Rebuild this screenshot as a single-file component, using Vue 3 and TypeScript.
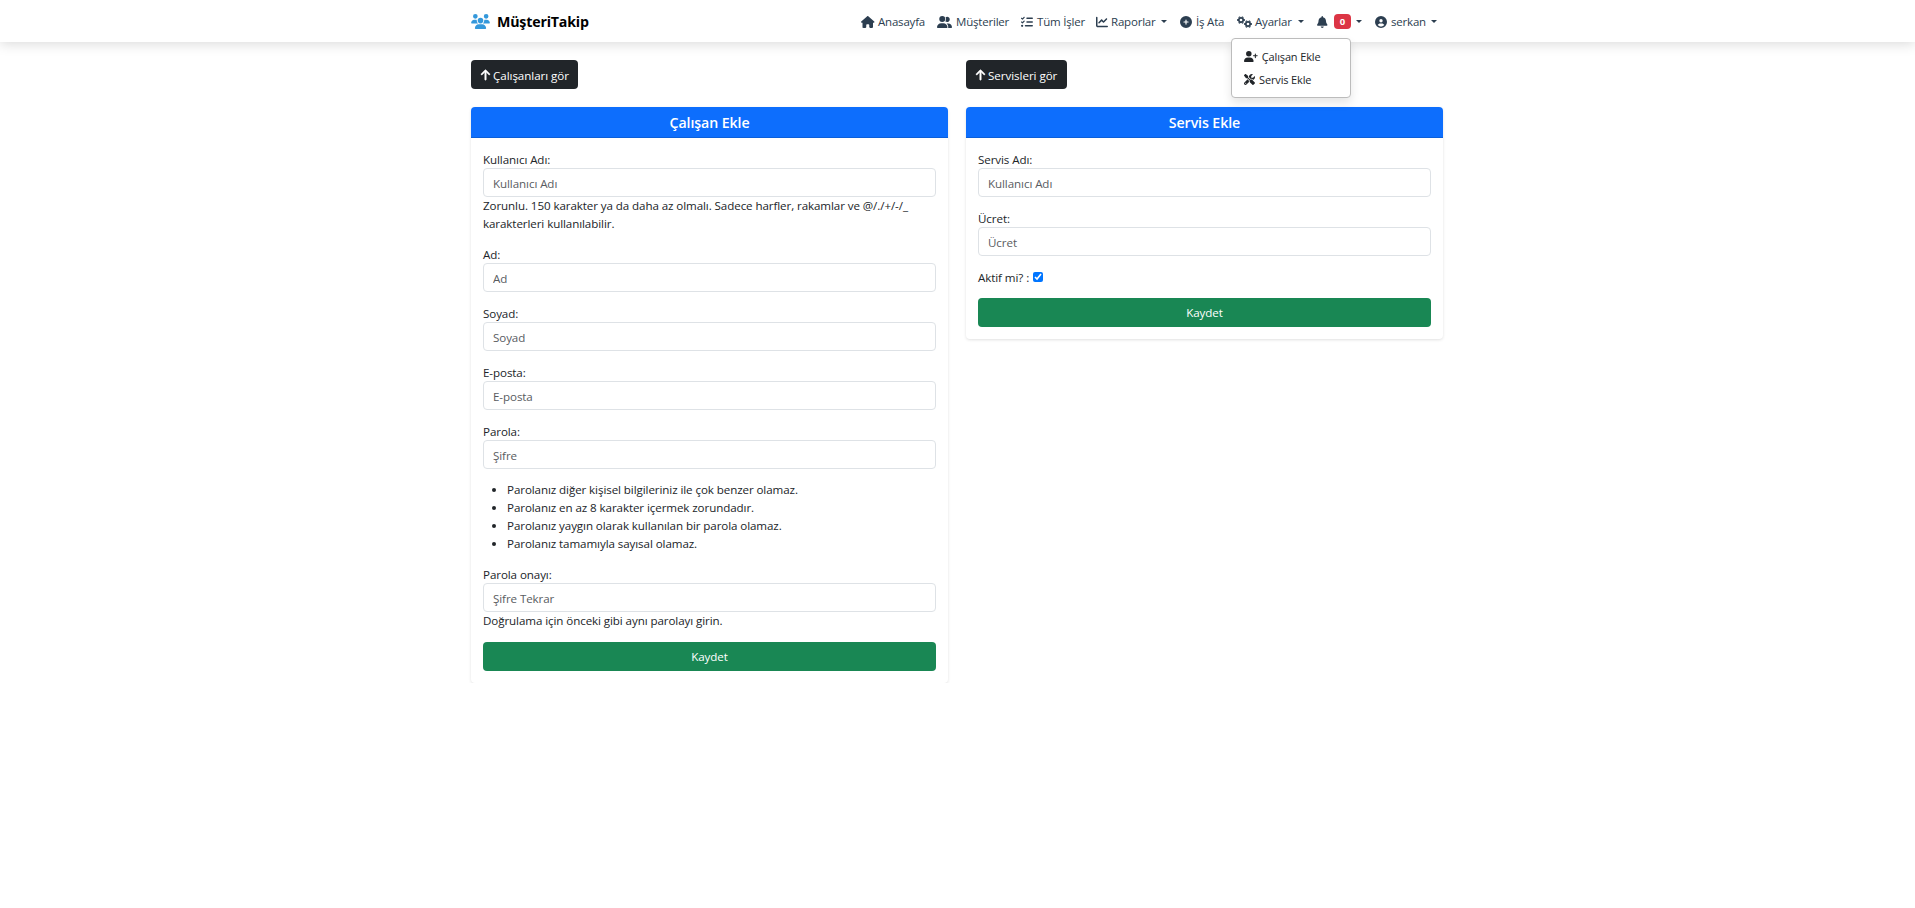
<script setup lang="ts">
interface Icon { w: number; d: string }
interface NavItem { icon: string; text?: string; badge?: number; width: number; slot: number; caret?: boolean; menu?: boolean }
interface Field { label: string; placeholder: string; help?: string; rules?: string[] }

const icons: Record<string, Icon> = {
  house: { w: 576, d: 'M575.8 255.5c0 18-15 32.1-32 32.1h-32l.7 160.2c0 2.7-.2 5.4-.5 8.1V472c0 22.1-17.9 40-40 40H392c-22.1 0-40-17.9-40-40V384c0-17.7-14.3-32-32-32H256c-17.7 0-32 14.3-32 32v88c0 22.1-17.9 40-40 40H104c-22.1 0-40-17.9-40-40V287.6H32c-18 0-32-14-32-32.1c0-9 3-17 10-24L266.4 8c7-7 15-8 22-8s15 2 21 7L564.8 231.5c8 7 12 15 11 24z' },
  userGroup: { w: 640, d: 'M96 128a128 128 0 1 1 256 0A128 128 0 1 1 96 128zM0 482.3C0 383.8 79.8 304 178.3 304h91.4C368.2 304 448 383.8 448 482.3c0 16.4-13.3 29.7-29.7 29.7H29.7C13.3 512 0 498.7 0 482.3zM609.3 512H471.4c5.4-9.4 8.6-20.3 8.6-32v-8c0-60.7-27.1-115.2-69.8-151.8c2.4-.1 4.7-.2 7.1-.2h61.4C567.8 320 640 392.2 640 481.3c0 17-13.8 30.7-30.7 30.7zM432 256c-31 0-59-12.6-79.3-32.9C372.4 196.5 384 163.6 384 128c0-26.8-6.6-52.1-18.3-74.3C384.3 40.1 407.2 32 432 32c61.9 0 112 50.1 112 112s-50.1 112-112 112z' },
  list: { w: 512, d: 'M152.1 38.2c9.9 8.9 10.7 24 1.8 33.9l-72 80c-4.4 4.9-10.6 7.8-17.2 7.9s-12.9-2.4-17.6-7L7 113C-2.3 103.6-2.3 88.4 7 79s24.6-9.4 33.9 0l22.1 22.1 55.1-61.2c8.9-9.9 24-10.7 33.9-1.8zm0 160c9.9 8.9 10.7 24 1.8 33.9l-72 80c-4.4 4.9-10.6 7.8-17.2 7.9s-12.9-2.4-17.6-7L7 273c-9.4-9.4-9.4-24.6 0-33.9s24.6-9.4 33.9 0l22.1 22.1 55.1-61.2c8.9-9.9 24-10.7 33.9-1.8zM224 96c0-17.7 14.3-32 32-32H480c17.7 0 32 14.3 32 32s-14.3 32-32 32H256c-17.7 0-32-14.3-32-32zm0 160c0-17.7 14.3-32 32-32H480c17.7 0 32 14.3 32 32s-14.3 32-32 32H256c-17.7 0-32-14.3-32-32zM160 416c0-17.7 14.3-32 32-32H480c17.7 0 32 14.3 32 32s-14.3 32-32 32H192c-17.7 0-32-14.3-32-32zM48 368a48 48 0 1 1 0 96 48 48 0 1 1 0-96z' },
  chart: { w: 512, d: 'M64 64c0-17.7-14.3-32-32-32S0 46.3 0 64V400c0 44.2 35.8 80 80 80H480c17.7 0 32-14.3 32-32s-14.3-32-32-32H80c-8.8 0-16-7.2-16-16V64zm406.6 86.6c12.5-12.5 12.5-32.8 0-45.3s-32.8-12.5-45.3 0L320 210.7l-57.4-57.4c-12.5-12.5-32.8-12.5-45.3 0l-112 112c-12.5 12.5-12.5 32.8 0 45.3s32.8 12.5 45.3 0L240 221.3l57.4 57.4c12.5 12.5 32.8 12.5 45.3 0l128-128z' },
  plus: { w: 512, d: 'M256 512A256 256 0 1 0 256 0a256 256 0 1 0 0 512zM232 344V280H168c-13.3 0-24-10.7-24-24s10.7-24 24-24h64V168c0-13.3 10.7-24 24-24s24 10.7 24 24v64h64c13.3 0 24 10.7 24 24s-10.7 24-24 24H280v64c0 13.3-10.7 24-24 24s-24-10.7-24-24z' },
  bell: { w: 448, d: 'M224 0c-17.7 0-32 14.3-32 32V51.2C119 66 64 130.6 64 208v18.8c0 47-17.3 92.4-48.5 127.6l-7.4 8.3c-8.4 9.4-10.4 22.9-5.3 34.4S19.4 416 32 416H416c12.6 0 24-7.4 29.2-18.9s3.1-25-5.3-34.4l-7.4-8.3C401.3 319.2 384 273.9 384 226.8V208c0-77.4-55-142-128-156.8V32c0-17.7-14.3-32-32-32zm45.3 493.3c12-12 18.7-28.3 18.7-45.3H160c0 17 6.7 33.3 18.7 45.3s28.3 18.7 45.3 18.7s33.3-6.7 45.3-18.7z' },
  user: { w: 512, d: 'M399 384.2C376.9 345.8 335.4 320 288 320H224c-47.4 0-88.9 25.8-111 64.2c35.2 39.2 86.2 63.8 143 63.8s107.8-24.7 143-63.8zM0 256a256 256 0 1 1 512 0A256 256 0 1 1 0 256zm256 16a72 72 0 1 0 0-144 72 72 0 1 0 0 144z' },
  userPlus: { w: 640, d: 'M96 128a128 128 0 1 1 256 0A128 128 0 1 1 96 128zM0 482.3C0 383.8 79.8 304 178.3 304h91.4C368.2 304 448 383.8 448 482.3c0 16.4-13.3 29.7-29.7 29.7H29.7C13.3 512 0 498.7 0 482.3zM504 312V248H440c-13.3 0-24-10.7-24-24s10.7-24 24-24h64V136c0-13.3 10.7-24 24-24s24 10.7 24 24v64h64c13.3 0 24 10.7 24 24s-10.7 24-24 24H552v64c0 13.3-10.7 24-24 24s-24-10.7-24-24z' },
  tools: { w: 512, d: 'M78.6 5C69.1-2.4 55.6-1.5 47 7L7 47c-8.5 8.5-9.4 22-2.1 31.6l80 104c4.5 5.9 11.6 9.4 19 9.4h54.1l109 109c-14.7 29-10 65.4 14.3 89.6l112 112c12.5 12.5 32.8 12.5 45.3 0l64-64c12.5-12.5 12.5-32.8 0-45.3l-112-112c-24.2-24.2-60.6-29-89.6-14.3l-109-109V104c0-7.5-3.5-14.5-9.4-19L78.6 5zM19.9 396.1C7.2 408.8 0 426.1 0 444.1C0 481.6 30.4 512 67.9 512c18 0 35.3-7.2 48-19.9L233.7 374.3c-7.8-20.9-9-43.6-3.6-65.1l-61.7-61.7L19.9 396.1zM512 144c0-10.5-1.1-20.7-3.2-30.5c-2.4-11.2-16.1-14.1-24.2-6l-63.9 63.9c-3 3-7.1 4.7-11.3 4.7H352c-8.8 0-16-7.2-16-16V102.6c0-4.2 1.7-8.3 4.7-11.3l63.9-63.9c8.1-8.1 5.2-21.8-6-24.2C388.7 1.1 378.5 0 368 0C288.5 0 224 64.5 224 144l0 .8 85.3 85.3c36-9.1 75.8 .5 104 28.7L429 274.5c49-23 83-72.8 83-130.5zM56 432a24 24 0 1 1 48 0 24 24 0 1 1 -48 0z' },
  up: { w: 384, d: 'M214.6 41.4c-12.5-12.5-32.8-12.5-45.3 0l-160 160c-12.5 12.5-12.5 32.8 0 45.3s32.8 12.5 45.3 0L160 141.2V448c0 17.7 14.3 32 32 32s32-14.3 32-32V141.2L329.4 246.6c12.5 12.5 32.8 12.5 45.3 0s12.5-32.8 0-45.3l-160-160z' },
  users: { w: 640, d: 'M144 0a80 80 0 1 1 0 160A80 80 0 1 1 144 0zM512 0a80 80 0 1 1 0 160A80 80 0 1 1 512 0zM0 298.7C0 239.8 47.8 192 106.7 192h42.7c15.9 0 31 3.5 44.6 9.7c-1.3 7.2-1.9 14.7-1.9 22.3c0 38.2 16.8 72.5 43.3 96H21.3C9.6 320 0 310.4 0 298.7zM405.3 320h-.7c26.6-23.5 43.3-57.8 43.3-96c0-7.6-.7-15-1.9-22.3c13.6-6.3 28.7-9.7 44.6-9.7h42.7C592.2 192 640 239.8 640 298.7c0 11.8-9.6 21.3-21.3 21.3H405.3zM224 224a96 96 0 1 1 192 0 96 96 0 1 1 -192 0zM128 485.3C128 411.7 187.7 352 261.3 352H378.7C452.3 352 512 411.7 512 485.3c0 14.7-11.9 26.7-26.7 26.7H154.7c-14.7 0-26.7-11.9-26.7-26.7z' },
}
const box = (name: string) => `0 0 ${icons[name].w} 512`

const nav: NavItem[] = [
  { icon: 'house', text: 'Anasayfa', width: 76, slot: 17 },
  { icon: 'userGroup', text: 'Müşteriler', width: 84, slot: 19 },
  { icon: 'list', text: 'Tüm İşler', width: 75, slot: 16 },
  { icon: 'chart', text: 'Raporlar', width: 84, slot: 15, caret: true },
  { icon: 'plus', text: 'İş Ata', width: 57, slot: 16 },
  { icon: 'gears', text: 'Ayarlar', width: 80, slot: 18, caret: true, menu: true },
  { icon: 'bell', badge: 0, width: 58, slot: 17, caret: true },
  { icon: 'user', text: 'serkan', width: 75, slot: 16, caret: true },
]

const menu = [
  { icon: 'userPlus', text: 'Çalışan Ekle' },
  { icon: 'tools', text: 'Servis Ekle' },
]

const employeeFields: Field[] = [
  { label: 'Kullanıcı Adı:', placeholder: 'Kullanıcı Adı', help: 'Zorunlu. 150 karakter ya da daha az olmalı. Sadece harfler, rakamlar ve @/./+/-/_ karakterleri kullanılabilir.' },
  { label: 'Ad:', placeholder: 'Ad' },
  { label: 'Soyad:', placeholder: 'Soyad' },
  { label: 'E-posta:', placeholder: 'E-posta' },
  {
    label: 'Parola:', placeholder: 'Şifre',
    rules: [
      'Parolanız diğer kişisel bilgileriniz ile çok benzer olamaz.',
      'Parolanız en az 8 karakter içermek zorundadır.',
      'Parolanız yaygın olarak kullanılan bir parola olamaz.',
      'Parolanız tamamıyla sayısal olamaz.',
    ],
  },
  { label: 'Parola onayı:', placeholder: 'Şifre Tekrar', help: 'Doğrulama için önceki gibi aynı parolayı girin.' },
]

const serviceFields: Field[] = [
  { label: 'Servis Adı:', placeholder: 'Kullanıcı Adı' },
  { label: 'Ücret:', placeholder: 'Ücret' },
]

const sections = [
  { link: 'Çalışanları gör', title: 'Çalışan Ekle', fields: employeeFields, active: false },
  { link: 'Servisleri gör', title: 'Servis Ekle', fields: serviceFields, active: true },
]
</script>

<template>
  <div class="page">
    <header class="navbar">
      <div class="container bar">
        <a class="brand">
          <svg class="brand-icon" :viewBox="box('users')"><path :d="icons.users.d" /></svg>
          <span>MüşteriTakip</span>
        </a>
        <nav class="nav">
          <div v-for="item in nav" :key="item.icon" class="nav-item" :style="{ width: item.width + 'px' }">
            <span class="slot" :style="{ width: item.slot + 'px' }">
              <svg v-if="item.icon === 'gears'" class="icon gears" viewBox="0 0 15 12">
                <circle class="ring" cx="4" cy="4" r="2.2" />
                <circle class="teeth" cx="4" cy="4" r="3.4" pathLength="12" />
                <circle class="ring" cx="11" cy="8" r="2.2" />
                <circle class="teeth" cx="11" cy="8" r="3.4" pathLength="12" />
              </svg>
              <svg v-else class="icon" :viewBox="box(item.icon)"><path :d="icons[item.icon].d" /></svg>
            </span>
            <span v-if="item.text">{{ item.text }}</span>
            <span v-else class="badge">{{ item.badge }}</span>
            <i v-if="item.caret" class="caret"></i>
            <div v-if="item.menu" class="dropdown">
              <a v-for="entry in menu" :key="entry.icon" class="dropdown-item">
                <svg class="icon" :viewBox="box(entry.icon)"><path :d="icons[entry.icon].d" /></svg>
                <span>{{ entry.text }}</span>
              </a>
            </div>
          </div>
        </nav>
      </div>
    </header>

    <main class="container columns">
      <section v-for="section in sections" :key="section.title" class="column">
        <a class="btn dark">
          <svg class="icon" :viewBox="box('up')"><path :d="icons.up.d" /></svg>
          <span>{{ section.link }}</span>
        </a>
        <div class="card">
          <h5 class="card-header">{{ section.title }}</h5>
          <form class="card-body" @submit.prevent>
            <div v-for="field in section.fields" :key="field.label" class="field">
              <label>{{ field.label }}</label>
              <input class="control" type="text" :placeholder="field.placeholder" />
              <div v-if="field.help">{{ field.help }}</div>
              <ul v-if="field.rules" class="rules">
                <li v-for="rule in field.rules" :key="rule">{{ rule }}</li>
              </ul>
            </div>
            <div v-if="section.active" class="field check">
              <label>Aktif mi? :</label>
              <input class="checkbox" type="checkbox" checked />
            </div>
            <button class="btn save" type="submit">Kaydet</button>
          </form>
        </div>
      </section>
    </main>
  </div>
</template>

<style>
body { background: #fff; }
</style>

<style scoped>
.page, .page * { box-sizing: border-box; }
.page {
  font-family: "Open Sans", "Noto Sans", sans-serif;
  font-size: 11.6px;
  line-height: 18px;
  letter-spacing: -0.09px;
  color: #212529;
}
.container { width: 972px; margin: 0 0 0 calc(50% - 486.5px); }
.navbar { height: 42px; background: #fff; box-shadow: 0 2px 12px rgba(0, 0, 0, .15); position: relative; z-index: 2; }
.bar { display: flex; align-items: center; justify-content: space-between; height: 42px; }
.brand { display: flex; align-items: center; gap: 7px; font-size: 14.2px; font-weight: 700; letter-spacing: -0.18px; color: #000; }
.brand span { padding-top: 1px; }
.brand-icon { display: block; width: 19px; height: 15px; fill: #3498db; }
.nav { display: flex; align-items: center; height: 42px; margin-right: -7px; font-size: 11.5px; letter-spacing: -0.2px; color: #2c3e50; }
.nav-item { position: relative; display: flex; align-items: center; flex: none; height: 42px; padding: 1px 13px 0 0; white-space: nowrap; }
.slot { flex: none; display: flex; }
.icon { display: block; height: 12px; width: auto; fill: currentColor; flex: none; overflow: visible; }
.gears circle { fill: none; stroke: currentColor; }
.gears .ring { stroke-width: 1.7; }
.gears .teeth { stroke-width: 1.1; stroke-dasharray: 1 1; stroke-dashoffset: .5; }
.caret { margin-left: auto; border-top: 3.6px solid; border-left: 3.6px solid transparent; border-right: 3.6px solid transparent; }
.badge { width: 17px; height: 15px; border-radius: 4px; background: #dc3545; color: #fff; font-size: 9.5px; font-weight: 700; line-height: 15px; text-align: center; letter-spacing: 0; }
.dropdown { position: absolute; top: 38px; left: -6px; width: 120px; height: 60px; padding: 6px 0; background: #fff; border: 1px solid #bcbcbc; border-radius: 4px; box-shadow: 0 5px 10px rgba(0, 0, 0, .1); font-size: 11px; letter-spacing: -0.14px; color: #212529; }
.dropdown-item { display: flex; align-items: center; gap: 4px; height: 23px; padding: 0 12px; }
.dropdown-item .icon { height: 11px; }
.columns { display: grid; grid-template-columns: 1fr 1fr; gap: 18px; align-items: start; padding-top: 18px; }
.column { display: flex; flex-direction: column; align-items: flex-start; gap: 18px; }
.btn { display: flex; align-items: center; justify-content: center; height: 29px; border: 0; border-radius: 4px; padding: 1px 10px 0; font: inherit; letter-spacing: inherit; color: #fff; }
.dark { gap: 3px; background: #212529; padding: 2px 9.5px 0 10px; letter-spacing: -0.05px; }
.dark .icon { margin-top: -1px; stroke: currentColor; stroke-width: 18; }
.card { width: 100%; border-radius: 4px; background: #fff; box-shadow: 0 1px 3px rgba(0, 0, 0, .12); }
.card-header { margin: 0; height: 31px; padding: 7px 12px 5px; border-bottom: 1px solid #0b5fd9; border-radius: 4px 4px 0 0; background: #0d6efd; color: #fff; font-size: 14.2px; line-height: 18px; font-weight: 600; letter-spacing: -0.1px; text-align: center; }
.card-body { padding: 12px; margin: 0; }
.field { margin-bottom: 12px; }
.field label { display: block; height: 18px; padding-top: 1px; }
.control { display: block; width: 100%; height: 29px; padding: 3px 9px 1px; border: 1px solid #dee2e6; border-radius: 4px; background: #fff; font: inherit; letter-spacing: inherit; color: #212529; outline: none; }
.control::placeholder { color: #595c5f; opacity: 1; }
.rules { margin: 12px 0 0; padding-left: 24px; }
.check { display: flex; align-items: center; gap: 4px; height: 18px; }
.checkbox { width: 10px; height: 10px; margin: 0; accent-color: #0075ff; }
.save { width: 100%; background: #198754; }
</style>
